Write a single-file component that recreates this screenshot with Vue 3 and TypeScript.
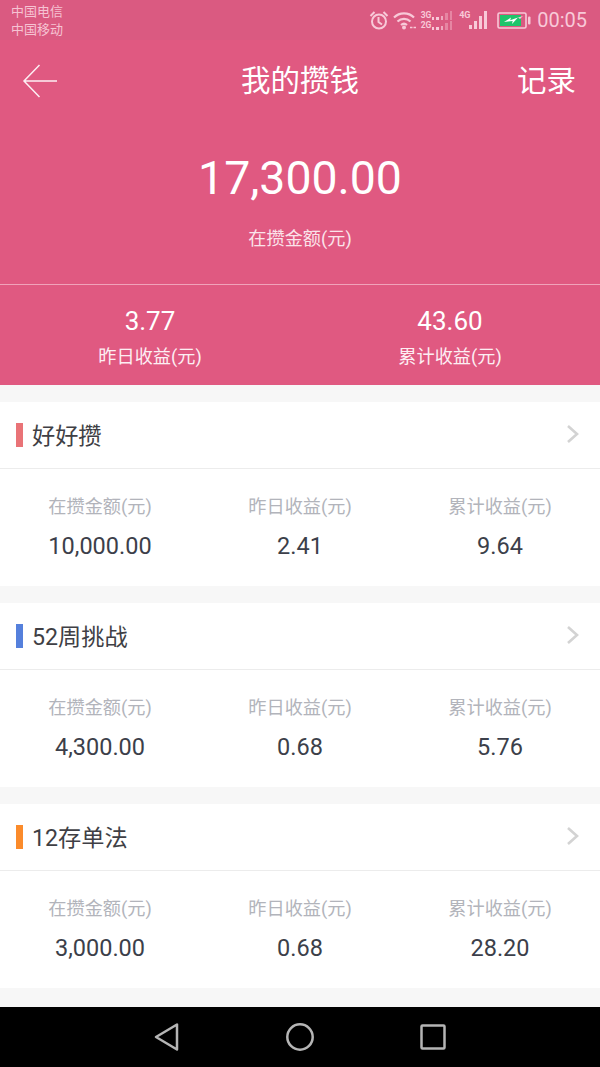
<script setup lang="ts">
interface Stat { label: string; value: string }
interface Plan { name: string; color: string; stats: Stat[] }
const labels = ['在攒金额(元)', '昨日收益(元)', '累计收益(元)']
const make = (name: string, color: string, v: string[]): Plan => ({
  name, color, stats: v.map((value, i) => ({ label: labels[i], value }))
})
const plans: Plan[] = [
  make('好好攒', '#e97377', ['10,000.00', '2.41', '9.64']),
  make('52周挑战', '#5580dc', ['4,300.00', '0.68', '5.76']),
  make('12存单法', '#fb8b2b', ['3,000.00', '0.68', '28.20'])
]
</script>

<template>
  <div class="screen">
    <div class="scroll">
      <header class="hero">
        <div class="status">
          <div class="carriers"><span>中国电信</span><span>中国移动</span></div>
          <div class="status-right">
            <svg width="20" height="20" viewBox="0 0 20 20" fill="none" stroke="#f8c9d8" stroke-width="2">
              <circle cx="10" cy="11.500" r="7" />
              <path d="M9.500 7v5l3.500 2.500M1.500 6 5.500 2M18.500 6 14.500 2" />
            </svg>
            <svg class="wifi" width="24" height="20" viewBox="0 0 24 20" fill="none" stroke="#f8c9d8" stroke-width="2.200">
              <path d="M1 7.500C6.500 2 15.500 2 21 7.500M4.500 11.500c3.800-3.600 9.200-3.600 13 0M8 15c1.800-1.500 4.200-1.500 6 0" />
              <circle cx="11" cy="17.500" r="2" fill="#f8c9d8" stroke="none" />
              <path d="M17 17.500h7" stroke-width="1.500" stroke-dasharray="2.500 1" />
            </svg>
            <div class="net-two">
              <div class="net-row"><b>3G</b><i class="d1" /><i class="d1" /><i class="d2" /><i class="d3" /><i class="d4" /></div>
              <div class="net-row"><b>2G</b><i class="d1" /><i class="d1" /><i class="d2" /><i class="d3" /><i class="d4" /></div>
            </div>
            <b class="lte">4G</b>
            <svg width="20" height="20" viewBox="0 0 20 20" fill="#f8c9d8">
              <rect x="0" y="15" width="3" height="4" /><rect x="5" y="11" width="3" height="8" />
              <rect x="10" y="6" width="3" height="13" /><rect x="15" y="1" width="3" height="18" />
            </svg>
            <svg class="battery" width="34" height="17" viewBox="0 0 34 17" fill="none">
              <rect x="1" y="1" width="28" height="15" rx="1.500" stroke="#f8c9d8" stroke-width="1.600" />
              <rect x="3" y="3" width="21" height="11" fill="#1fc46b" />
              <rect x="31" y="4.500" width="2.500" height="8" rx="1" fill="#f8c9d8" />
              <path d="M7 10 14 5.500l-.8 2.700L21 5.500l-6 6.500.7-3z" fill="#fff" />
              <path d="M21 5.500 26 4l-3 3z" fill="#f8c9d8" />
            </svg>
            <span class="time">00:05</span>
          </div>
        </div>
        <div class="nav">
          <svg width="36" height="36" viewBox="0 0 36 36" fill="none" stroke="#fdeef3" stroke-width="1.500">
            <path d="M17.500 2 2 18l15.500 16M2 18h33" />
          </svg>
          <h1>我的攒钱</h1>
          <span class="record">记录</span>
        </div>
        <div class="total">
          <div class="total-value">17,300.00</div>
          <div class="total-label">在攒金额(元)</div>
        </div>
        <div class="summary">
          <div class="summary-item"><div class="summary-value">3.77</div><div class="summary-label">昨日收益(元)</div></div>
          <div class="summary-item"><div class="summary-value">43.60</div><div class="summary-label">累计收益(元)</div></div>
        </div>
      </header>
      <section v-for="plan in plans" :key="plan.name" class="card">
        <div class="card-head">
          <span class="tag" :style="{ background: plan.color }" />
          <span class="card-name">{{ plan.name }}</span>
          <svg class="chevron" width="14" height="20" viewBox="0 0 14 20" fill="none" stroke="#d3d3d3" stroke-width="2.600">
            <path d="M2 2l9 8-9 8" />
          </svg>
        </div>
        <div class="card-body">
          <div v-for="s in plan.stats" :key="s.label" class="stat">
            <div class="stat-label">{{ s.label }}</div>
            <div class="stat-value">{{ s.value }}</div>
          </div>
        </div>
      </section>
    </div>
    <footer class="navbar">
      <svg width="28" height="30" viewBox="0 0 28 30" fill="none" stroke="#b5b5b5" stroke-width="2.500" stroke-linejoin="round">
        <path d="M24 2.500v25L3 15z" />
      </svg>
      <svg width="30" height="30" viewBox="0 0 30 30" fill="none" stroke="#b5b5b5" stroke-width="2.500">
        <circle cx="15" cy="15" r="12.700" />
      </svg>
      <svg class="square" width="26" height="26" viewBox="0 0 26 26" fill="none" stroke="#b5b5b5" stroke-width="2.500" stroke-linejoin="round">
        <rect x="1.500" y="1.500" width="23" height="23" rx="1" />
      </svg>
    </footer>
  </div>
</template>

<style scoped>
.screen {
  width: 600px;
  height: 1067px;
  display: flex;
  flex-direction: column;
  overflow: hidden;
  background: #f7f7f7;
  font-family: Roboto, "Noto Sans CJK SC", sans-serif;
}
.scroll { flex: 1; min-height: 0; overflow: hidden; }
.hero { background: #e05981; color: #fff; height: 385px; display: flex; flex-direction: column; }
.status {
  height: 40px;
  background: #da5a81;
  display: flex;
  justify-content: space-between;
  align-items: center;
  padding: 0 13px 0 11px;
  box-sizing: border-box;
}
.carriers { display: flex; flex-direction: column; font-size: 13px; line-height: 18px; color: #f6c3d3; padding-top: 2px; }
.status-right { display: flex; align-items: center; color: #f8c9d8; }
.wifi { margin-left: 4px; }
.net-two { margin-left: 4px; display: flex; flex-direction: column; gap: 1px; }
.net-row { display: flex; align-items: flex-end; gap: 2px; height: 9px; }
.net-row b {
  font-size: 8.500px;
  line-height: 9px;
  font-weight: 700;
  width: 9px;
  white-space: nowrap;
}
.net-row i { width: 2.500px; background: #f8c9d8; }
.d1 { height: 3px; }
.d2 { height: 4px; opacity: .7; }
.d3 { height: 7px; opacity: .4; }
.d4 { height: 8.500px; opacity: .4; }
.lte {
  font-size: 9px;
  font-weight: 700;
  width: 10px;
  margin: 0 0 10px 7px;
  white-space: nowrap;
}
.battery { margin-left: 8px; }
.time { margin-left: 6px; font-size: 20px; line-height: 24px; }
.nav {
  height: 82px;
  display: flex;
  align-items: center;
  justify-content: space-between;
  padding: 0 24px 0 22px;
  position: relative;
}
.nav h1 {
  position: absolute;
  left: 0;
  right: 0;
  margin: 0;
  text-align: center;
  font-size: 29.500px;
  font-weight: 400;
  line-height: 42px;
}
.record { font-size: 29.500px; line-height: 42px; }
.total { height: 162px; text-align: center; padding-top: 20px; box-sizing: border-box; }
.total-value { font-size: 46.400px; line-height: 56px; margin-top: 8px; }
.total-label { font-size: 18.200px; line-height: 24px; margin-top: 21px; color: #fbe3ea; }
.summary {
  flex: 1;
  display: grid;
  grid-template-columns: 1fr 1fr;
  border-top: 1px solid #f0a3ba;
  text-align: center;
}
.summary-item { padding-top: 19px; }
.summary-value { font-size: 26px; line-height: 34px; }
.summary-label { font-size: 18.200px; line-height: 24px; margin-top: 7px; color: #fdeef3; }
.card { background: #fff; margin-top: 16.500px; height: 184.500px; }
.card-head {
  height: 67px;
  box-sizing: border-box;
  border-bottom: 1px solid #ececec;
  display: flex;
  align-items: center;
  padding: 0 20px 0 16px;
}
.tag { width: 7px; height: 24px; margin-right: 9px; }
.card-name { flex: 1; font-size: 23.200px; color: #3f3f45; line-height: 34px; padding-top: 2px; }
.chevron { margin-bottom: 2px; }
.card-body { display: grid; grid-template-columns: repeat(3, 200px); text-align: center; padding-top: 25px; }
.stat-label { font-size: 18.200px; line-height: 26px; color: #b2b4bb; }
.stat-value { font-size: 23.500px; line-height: 32px; margin-top: 10px; color: #3c3f4a; }
.navbar {
  height: 60px;
  background: #000;
  flex: none;
  display: flex;
  align-items: center;
  padding-left: 153px;
  gap: 104px;
}
.square { margin-left: 1px; }
</style>
<style>
html, body { margin: 0; background: #f7f7f7; }
</style>
